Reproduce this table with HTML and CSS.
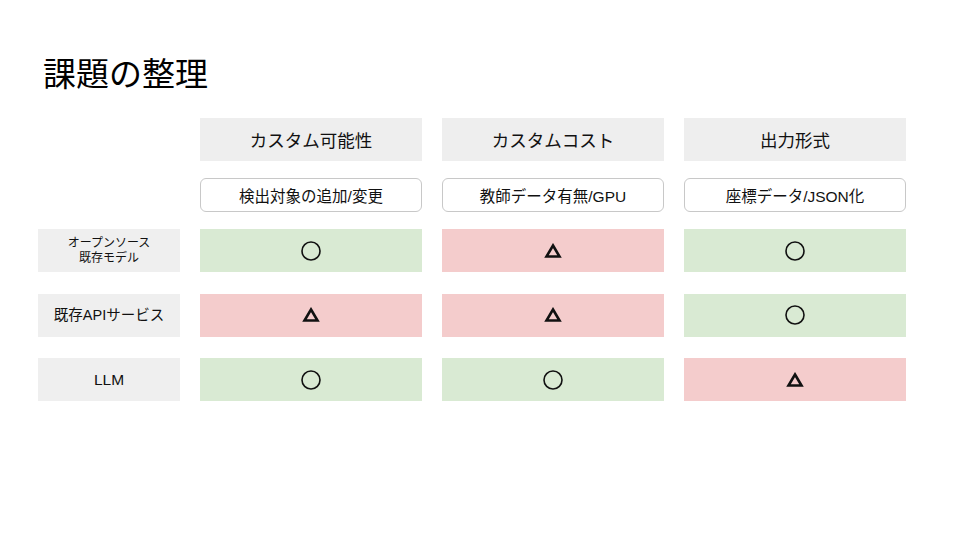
FILE: index.html
```html
<!DOCTYPE html>
<html lang="ja">
<head>
<meta charset="utf-8">
<title>課題の整理</title>
<link rel="stylesheet" href="styles.css">
</head>
<body>
<div class="slide">
  <h1 class="title">課題の整理</h1>
  <div class="table">
    <div class="row head-row">
      <div class="blank"></div>
      <div class="head">カスタム可能性</div>
      <div class="head">カスタムコスト</div>
      <div class="head">出力形式</div>
    </div>
    <div class="row sub-row">
      <div class="blank"></div>
      <div class="sub">検出対象の追加/変更</div>
      <div class="sub">教師データ有無/GPU</div>
      <div class="sub">座標データ/JSON化</div>
    </div>
    <div class="rows">
      <div class="row data-row">
        <div class="label small">オープンソース<br>既存モデル</div>
        <div class="cell good"><svg class="mark" width="22" height="22" viewBox="0 0 22 22"><circle cx="11" cy="11" r="9" fill="none" stroke="#111" stroke-width="1.6"/></svg></div>
        <div class="cell bad"><svg class="mark" width="18" height="16" viewBox="0 0 18 16"><polygon points="9,2.5 15.5,13.5 2.5,13.5" fill="none" stroke="#111" stroke-width="2.6"/></svg></div>
        <div class="cell good"><svg class="mark" width="22" height="22" viewBox="0 0 22 22"><circle cx="11" cy="11" r="9" fill="none" stroke="#111" stroke-width="1.6"/></svg></div>
      </div>
      <div class="row data-row">
        <div class="label">既存APIサービス</div>
        <div class="cell bad"><svg class="mark" width="18" height="16" viewBox="0 0 18 16"><polygon points="9,2.5 15.5,13.5 2.5,13.5" fill="none" stroke="#111" stroke-width="2.6"/></svg></div>
        <div class="cell bad"><svg class="mark" width="18" height="16" viewBox="0 0 18 16"><polygon points="9,2.5 15.5,13.5 2.5,13.5" fill="none" stroke="#111" stroke-width="2.6"/></svg></div>
        <div class="cell good"><svg class="mark" width="22" height="22" viewBox="0 0 22 22"><circle cx="11" cy="11" r="9" fill="none" stroke="#111" stroke-width="1.6"/></svg></div>
      </div>
      <div class="row data-row">
        <div class="label llm">LLM</div>
        <div class="cell good"><svg class="mark" width="22" height="22" viewBox="0 0 22 22"><circle cx="11" cy="11" r="9" fill="none" stroke="#111" stroke-width="1.6"/></svg></div>
        <div class="cell good"><svg class="mark" width="22" height="22" viewBox="0 0 22 22"><circle cx="11" cy="11" r="9" fill="none" stroke="#111" stroke-width="1.6"/></svg></div>
        <div class="cell bad"><svg class="mark" width="18" height="16" viewBox="0 0 18 16"><polygon points="9,2.5 15.5,13.5 2.5,13.5" fill="none" stroke="#111" stroke-width="2.6"/></svg></div>
      </div>
    </div>
  </div>
</div>
</body>
</html>
```

FILE: styles.css
```css
* {
  box-sizing: border-box;
}

html, body {
  margin: 0;
  padding: 0;
  background: #ffffff;
}

body {
  font-family: "Liberation Sans", "Noto Sans CJK JP", sans-serif;
  color: #111111;
}

.slide {
  width: 960px;
  height: 540px;
  padding: 55px 0 0 38px;
}

.title {
  margin: 0 0 23px 5px;
  font-size: 33px;
  line-height: 40px;
  font-weight: normal;
  color: #000000;
}

.table {
  display: flex;
  flex-direction: column;
}

.row {
  display: grid;
  grid-template-columns: 142px 222px 222px 222px;
  column-gap: 20px;
}

.head-row {
  height: 43px;
  margin-bottom: 17px;
}

.sub-row {
  height: 34px;
  margin-bottom: 17px;
}

.rows {
  display: flex;
  flex-direction: column;
  gap: 21.5px;
}

.data-row {
  height: 43px;
}

.head {
  background: #eeeeee;
  display: flex;
  align-items: center;
  justify-content: center;
  font-size: 17.5px;
}

.sub {
  border: 1px solid #c8c8c8;
  border-radius: 6px;
  display: flex;
  align-items: center;
  justify-content: center;
  font-size: 15.5px;
}

.label {
  background: #efefef;
  display: flex;
  align-items: center;
  justify-content: center;
  text-align: center;
  font-size: 14.5px;
  line-height: 1.25;
}

.label.small {
  font-size: 12px;
}

.label.llm {
  font-size: 15.5px;
}

.cell {
  display: flex;
  align-items: center;
  justify-content: center;
}

.good {
  background: #d9ead3;
}

.bad {
  background: #f4cccc;
}

.mark {
  display: block;
}
```
